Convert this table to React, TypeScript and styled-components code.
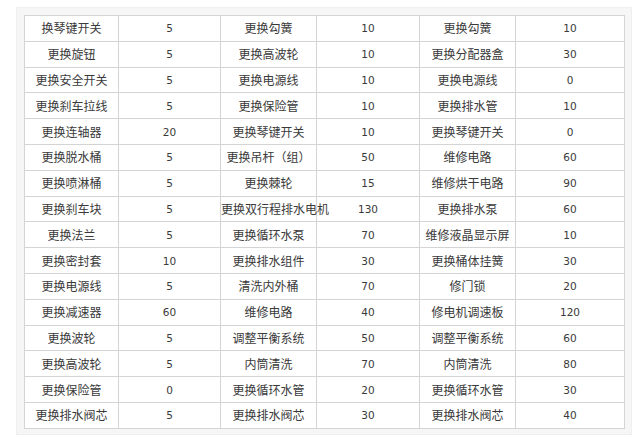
import * as React from "react";
import styled, { createGlobalStyle } from "styled-components";

const GlobalStyle = createGlobalStyle`
	html, body {
		margin: 0;
		padding: 0;
		background: #ffffff;
	}
	body {
		font-family: "Liberation Sans", "Noto Sans CJK SC", sans-serif;
	}
`;

const Page = styled.div`
	padding: 7px 8px 5px 16px;
`;

const Frame = styled.div`
	width: 600px;
	padding: 7px 7px 5px 7px;
	background: #f6f6f6;
	border: 1px solid #efefef;
`;

const Table = styled.table`
	width: 600px;
	border-collapse: collapse;
	table-layout: fixed;
	background: #ffffff;
	border: 1px solid #d2d2d2;
`;

const Cell = styled.td<{ $num?: boolean }>`
	height: 24.8px;
	padding: 0;
	border: 1px solid #d4d4d4;
	text-align: center;
	vertical-align: middle;
	color: #3a3a3a;
	font-size: 12px;
	line-height: 14px;
	font-family: ${(p) =>
		p.$num
			? `"DejaVu Sans", "Liberation Sans", sans-serif`
			: `"Noto Sans CJK SC", sans-serif`};
	${(p) => (p.$num ? "font-size: 10.5px;" : "")}
	white-space: nowrap;
`;

const widths = [94, 102, 96, 103, 96, 109];

const rows: [string, string, string, string, string, string][] = [
	["换琴键开关", "5", "更换勾簧", "10", "更换勾簧", "10"],
	["更换旋钮", "5", "更换高波轮", "10", "更换分配器盒", "30"],
	["更换安全开关", "5", "更换电源线", "10", "更换电源线", "0"],
	["更换刹车拉线", "5", "更换保险管", "10", "更换排水管", "10"],
	["更换连轴器", "20", "更换琴键开关", "10", "更换琴键开关", "0"],
	["更换脱水桶", "5", "更换吊杆（组）", "50", "维修电路", "60"],
	["更换喷淋桶", "5", "更换棘轮", "15", "维修烘干电路", "90"],
	["更换刹车块", "5", "更换双行程排水电机", "130", "更换排水泵", "60"],
	["更换法兰", "5", "更换循环水泵", "70", "维修液晶显示屏", "10"],
	["更换密封套", "10", "更换排水组件", "30", "更换桶体挂簧", "30"],
	["更换电源线", "5", "清洗内外桶", "70", "修门锁", "20"],
	["更换减速器", "60", "维修电路", "40", "修电机调速板", "120"],
	["更换波轮", "5", "调整平衡系统", "50", "调整平衡系统", "60"],
	["更换高波轮", "5", "内筒清洗", "70", "内筒清洗", "80"],
	["更换保险管", "0", "更换循环水管", "20", "更换循环水管", "30"],
	["更换排水阀芯", "5", "更换排水阀芯", "30", "更换排水阀芯", "40"],
];

export default function App() {
	return (
		<>
			<GlobalStyle />
			<Page>
				<Frame>
					<Table>
						<colgroup>
							{widths.map((w, i) => (
								<col key={i} style={{ width: w }} />
							))}
						</colgroup>
						<tbody>
							{rows.map((r, i) => (
								<tr key={i}>
									{r.map((c, j) => (
										<Cell key={j} $num={j % 2 === 1}>
											{c}
										</Cell>
									))}
								</tr>
							))}
						</tbody>
					</Table>
				</Frame>
			</Page>
		</>
	);
}
